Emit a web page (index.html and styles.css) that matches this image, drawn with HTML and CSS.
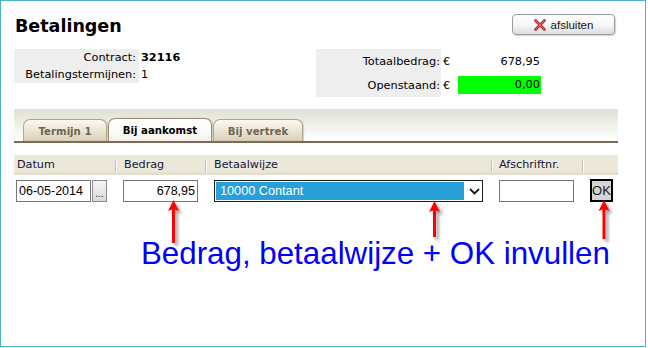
FILE: index.html
```html
<!DOCTYPE html>
<html>
<head>
<meta charset="utf-8">
<link rel="stylesheet" href="styles.css">
</head>
<body>
<div class="frame">
  <div class="top">
    <h1 class="title">Betalingen</h1>
    <button class="close" type="button">
      <svg class="x-icon" width="12" height="12" viewBox="0 0 12 12">
        <path d="M1.5 1.5 L10.5 10.5 M10.5 1.5 L1.5 10.5" stroke="#b3262b" stroke-width="2.6" stroke-linecap="round"/>
        <path d="M1.5 1.5 L10.5 10.5 M10.5 1.5 L1.5 10.5" stroke="#e8686a" stroke-width="1" stroke-linecap="round"/>
      </svg>
      <span>afsluiten</span>
    </button>
  </div>

  <div class="info">
    <table class="info-left">
      <tr><th>Contract:</th><td class="strong">32116</td></tr>
      <tr><th>Betalingstermijnen:</th><td>1</td></tr>
    </table>
    <table class="info-right">
      <tr><th>Totaalbedrag:</th><td class="eur">€</td><td class="amt">678,95</td></tr>
      <tr><th>Openstaand:</th><td class="eur">€</td><td class="amt"><span class="green">0,00</span></td></tr>
    </table>
  </div>

  <div class="tabband">
    <div class="tabs">
      <div class="tab t1">Termijn 1</div>
      <div class="tab t2 active">Bij aankomst</div>
      <div class="tab t3">Bij vertrek</div>
    </div>
  </div>

  <div class="grid">
    <div class="ghead">
      <div class="hc c1">Datum</div>
      <div class="hc c2 sep">Bedrag</div>
      <div class="hc c3 sep">Betaalwijze</div>
      <div class="hc c4 sep">Afschriftnr.</div>
      <div class="hc c5 sep"></div>
    </div>
    <div class="grow">
      <div class="dc d1">
        <input class="field date" type="text" value="06-05-2014">
        <button class="dots" type="button">...</button>
      </div>
      <div class="dc d2"><input class="field money" type="text" value="678,95"></div>
      <div class="dc d3">
        <div class="select">
          <div class="sel-val">10000 Contant</div>
          <svg class="chev" width="11" height="7" viewBox="0 0 11 7"><path d="M1 1 L5.5 5.5 L10 1" fill="none" stroke="#1a1a1a" stroke-width="1.8"/></svg>
        </div>
      </div>
      <div class="dc d4"><input class="field afs" type="text" value=""></div>
      <div class="dc d5"><button class="ok" type="button">OK</button></div>
    </div>
  </div>

  <svg class="arrows" width="648" height="348" viewBox="0 0 648 348">
    <defs>
      <filter id="sh" x="-50%" y="-20%" width="200%" height="150%">
        <feDropShadow dx="3" dy="3" stdDeviation="1.6" flood-color="#000" flood-opacity="0.35"/>
      </filter>
    </defs>
    <g fill="#ff0000" filter="url(#sh)">
      <polygon points="173.5,200 179,211 175,209.5 175,243 172,243 172,209.5 168,211"/>
      <polygon points="434.5,201 440,212 436,210.5 436,237 433,237 433,210.5 429,212"/>
      <polygon points="604,200 609.5,211 605.5,209.5 605.5,239 602.5,239 602.5,209.5 598.5,211"/>
    </g>
  </svg>
  <div class="note">Bedrag, betaalwijze + OK invullen</div>
</div>
</body>
</html>
```

FILE: styles.css
```css
html, body {
  margin: 0;
  padding: 0;
  background: #ffffff;
}
body {
  width: 648px;
  height: 348px;
  overflow: hidden;
  font-family: "DejaVu Sans", Verdana, sans-serif;
  color: #000;
}
.frame {
  position: relative;
  box-sizing: border-box;
  width: 646px;
  height: 347px;
  border: 1px solid #4ab2c7;
  background: #fff;
}
.top {
  display: flex;
  justify-content: space-between;
  align-items: flex-start;
  padding: 13px 30px 0 14px;
}
.title {
  margin: 0;
  padding-top: 2px;
  font-family: "DejaVu Sans", Verdana, sans-serif;
  font-weight: bold;
  font-size: 17.5px;
  line-height: 21px;
}
.close {
  box-sizing: border-box;
  width: 103px;
  height: 21px;
  margin: 0;
  padding: 0;
  border: 1px solid #9c9c9c;
  border-radius: 4px;
  background: linear-gradient(#ffffff 0%, #f6f6f6 55%, #dcdcdc 100%);
  box-shadow: 1px 1px 1px rgba(0,0,0,0.18);
  display: flex;
  align-items: center;
  justify-content: center;
  gap: 5px;
  font-family: "Liberation Sans", Arial, sans-serif;
  font-size: 11.5px;
  color: #111;
}
.x-icon { display: block; }

.info {
  display: flex;
  align-items: flex-start;
  margin-top: 12px;
  padding-left: 13px;
  font-size: 11.3px;
}
.info table {
  border-collapse: collapse;
  border-spacing: 0;
  table-layout: fixed;
  flex: none;
}
.info th {
  box-sizing: border-box;
  font-weight: normal;
  text-align: right;
  background: #eeeeee;
  white-space: nowrap;
  padding: 0;
}
.info td { box-sizing: border-box; }
.info-left { width: 302px; }
.info-left th {
  width: 125px;
  height: 17px;
  padding-right: 3px;
}
.info-left td {
  width: 177px;
  padding: 0 0 0 2px;
}
.info-left td.strong { font-weight: bold; }
.info-right { width: 225px; }
.info-right th {
  width: 125px;
  height: 24px;
  padding-right: 1px;
}
.info-right td.eur {
  width: 17px;
  padding: 0 0 0 2px;
}
.info-right td.amt {
  width: 83px;
  padding: 0;
  text-align: right;
}
.info-right tr:first-child td.amt { padding-right: 1px; }
.green {
  display: block;
  height: 18px;
  line-height: 18px;
  background: #00ff00;
  padding-right: 1px;
}

.tabband {
  box-sizing: border-box;
  margin: 12px 0 0 13px;
  width: 604px;
  height: 34px;
  border-bottom: 2px solid #7c6b59;
  background: linear-gradient(#dfe0d3 0%, #f2f2ec 55%, #ffffff 100%);
  padding: 9px 0 0 9px;
}
.tabs {
  display: flex;
  align-items: flex-end;
  gap: 1px;
  height: 23px;
}
.tab {
  box-sizing: border-box;
  height: 22px;
  border: 1px solid #b3a68a;
  border-bottom: none;
  border-radius: 7px 7px 0 0;
  background: linear-gradient(#fbf8ef 0%, #ebe5d4 50%, #d8cfb7 100%);
  box-shadow: 1px 0 1px rgba(90,70,40,0.25);
  font-weight: bold;
  font-size: 10.2px;
  color: #6d6654;
  display: flex;
  align-items: center;
  justify-content: center;
  padding-top: 1px;
}
.t1 { width: 84px; }
.t2 { width: 104px; }
.t3 { width: 90px; }
.tab.active {
  height: 23px;
  border-color: #9a8b76;
  background: linear-gradient(#ffffff 0%, #fbfaf7 60%, #f1efe8 100%);
  color: #000;
}

.grid {
  margin: 12px 0 0 13px;
  width: 604px;
}
.ghead, .grow {
  display: grid;
  grid-template-columns: 101px 90px 286px 91px 36px;
}
.ghead {
  height: 20px;
  background: linear-gradient(#ece9da 0%, #ebe8d9 80%, #dedbcb 100%);
  font-size: 11.2px;
  color: #15153a;
}
.hc {
  position: relative;
  line-height: 20px;
  white-space: nowrap;
  padding-left: 9px;
}
.hc.c1 { padding-left: 3px; }
.hc.c4 { padding-left: 8px; }
.hc.sep::before {
  content: "";
  position: absolute;
  left: 0;
  top: 4px;
  bottom: 2px;
  width: 1px;
  background: #c8c5b4;
  box-shadow: 1px 0 0 #ffffff;
}

.grow {
  margin-top: 5px;
  height: 22px;
}
.dc {
  display: flex;
  align-items: flex-start;
}
.d1 { padding-left: 2px; }
.d2 { padding-left: 8px; }
.d3 { padding-left: 9px; }
.d4 { padding-left: 8px; }
.d5 { padding-left: 8px; }
.field {
  box-sizing: border-box;
  width: 75px;
  height: 22px;
  margin: 0;
  border: 1px solid #777777;
  padding: 0 2px;
  font-family: "Liberation Sans", Arial, sans-serif;
  font-size: 12.5px;
  color: #000;
  background: #fff;
  outline: none;
}
.money { text-align: right; padding-right: 2px; }
.dots {
  box-sizing: border-box;
  width: 15px;
  height: 22px;
  margin: 0 0 0 1px;
  padding: 0 0 2px 0;
  border: 1px solid #8c8c8c;
  background: linear-gradient(#f6f6f6, #d9d9d9);
  font-family: "Liberation Sans", Arial, sans-serif;
  font-size: 10px;
  line-height: 10px;
  color: #222;
  display: flex;
  align-items: flex-end;
  justify-content: center;
}
.select {
  box-sizing: border-box;
  width: 269px;
  height: 22px;
  border: 1px solid #1e1e1e;
  background: #fff;
  padding: 1px;
  display: flex;
  align-items: center;
}
.sel-val {
  width: 244px;
  height: 18px;
  line-height: 18px;
  padding-left: 4px;
  background: #27a0da;
  color: #fff;
  font-family: "Liberation Sans", Arial, sans-serif;
  font-size: 12.7px;
}
.chev {
  display: block;
  margin-left: 5px;
}
.ok {
  box-sizing: border-box;
  width: 23px;
  height: 23px;
  margin: -1px 0 0 0;
  padding: 0;
  border: 2px solid #000;
  background: #d5d5d5;
  font-family: "Liberation Sans", Arial, sans-serif;
  font-size: 13px;
  color: #1a1a2a;
}

.arrows {
  position: absolute;
  left: -1px;
  top: -1px;
  pointer-events: none;
}
.note {
  position: absolute;
  left: 140px;
  top: 237px;
  font-family: "Liberation Sans", Arial, sans-serif;
  font-size: 31.3px;
  line-height: 31.3px;
  color: #0000ff;
  white-space: nowrap;
}
```
